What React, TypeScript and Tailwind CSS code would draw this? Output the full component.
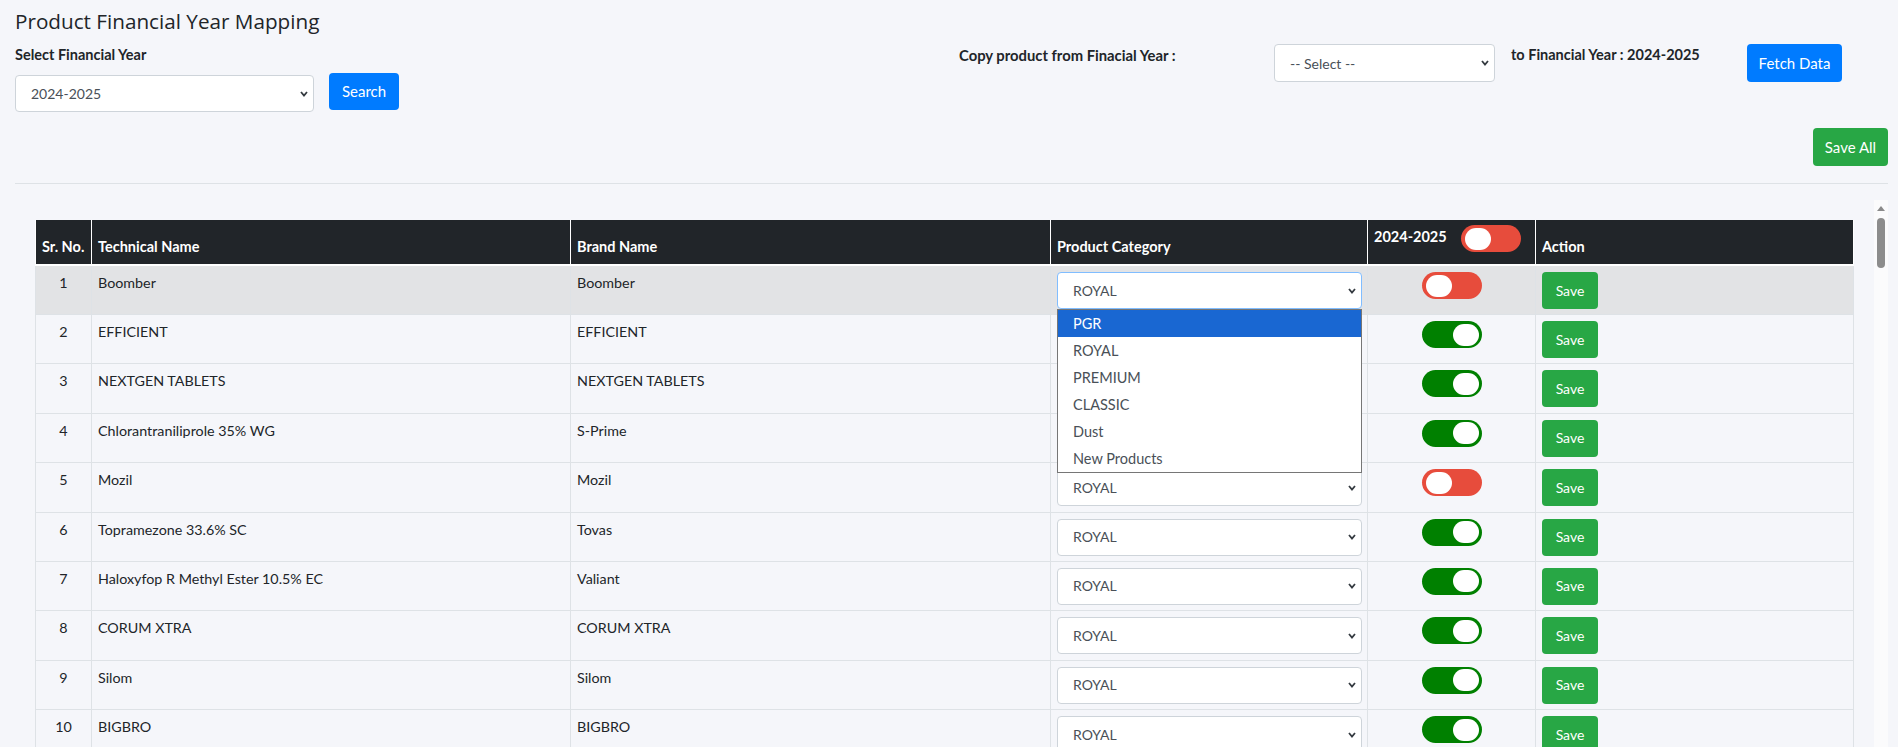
import React from "react";

type Row = { n: number; t: string; b: string; on: boolean };

const rows: Row[] = [
  { n: 1, t: "Boomber", b: "Boomber", on: false },
  { n: 2, t: "EFFICIENT", b: "EFFICIENT", on: true },
  { n: 3, t: "NEXTGEN TABLETS", b: "NEXTGEN TABLETS", on: true },
  { n: 4, t: "Chlorantraniliprole 35% WG", b: "S-Prime", on: true },
  { n: 5, t: "Mozil", b: "Mozil", on: false },
  { n: 6, t: "Topramezone 33.6% SC", b: "Tovas", on: true },
  { n: 7, t: "Haloxyfop R Methyl Ester 10.5% EC", b: "Valiant", on: true },
  { n: 8, t: "CORUM XTRA", b: "CORUM XTRA", on: true },
  { n: 9, t: "Silom", b: "Silom", on: true },
  { n: 10, t: "BIGBRO", b: "BIGBRO", on: true },
];

const options = ["PGR", "ROYAL", "PREMIUM", "CLASSIC", "Dust", "New Products"];

function Chevron() {
  return (
    <svg width="8" height="6" viewBox="0 0 8 6" className="shrink-0">
      <polyline points="1,1 4,4.5 7,1" fill="none" stroke="#343a40" strokeWidth="1.8" />
    </svg>
  );
}

function FakeSelect({
  value,
  focused = false,
  h = "h-[37px]",
  w = "w-full",
}: {
  value: string;
  focused?: boolean;
  h?: string;
  w?: string;
}) {
  return (
    <div
      className={`flex items-center justify-between bg-white border rounded-[4px] pl-[15px] pr-[5px] text-[14px] text-[#495057] ${h} ${w} ${
        focused ? "border-[#80bdff]" : "border-[#ced4da]"
      }`}
    >
      <span>{value}</span>
      <Chevron />
    </div>
  );
}

function Toggle({ on }: { on: boolean }) {
  return (
    <div
      className={`flex items-center w-[60px] h-[27px] rounded-full ${
        on ? "bg-[#008000] justify-end pr-[3px]" : "bg-[#e74c3c] justify-start pl-[4px]"
      }`}
    >
      <div className="w-[26px] h-[22px] rounded-full bg-white" />
    </div>
  );
}

export default function App() {
  return (
    <div className="min-h-screen bg-[#f5f6fa] pl-[15px] pr-[10px] text-[#212529] font-['Lato','Liberation_Sans',sans-serif]">
      <h1 className="pt-[6px] text-[20.7px] leading-[30px] font-normal text-[#212529] font-['Open_Sans','Noto_Sans',sans-serif]">
        Product Financial Year Mapping
      </h1>

      <div className="flex items-start mt-[8px]">
        <div className="w-[944px] shrink-0">
          <div className="mt-[1px] text-[14.5px] leading-[20px] font-bold">Select Financial Year</div>
          <div className="flex items-start mt-[8px]">
            <div className="mt-[2px]">
              <FakeSelect value="2024-2025" w="w-[299px]" />
            </div>
            <button className="ml-[15px] w-[70px] h-[37px] rounded-[4px] bg-[#007bff] text-white text-[15px]">
              Search
            </button>
          </div>
        </div>
        <div className="w-[315px] shrink-0 mt-[1px] text-[14.8px] leading-[20px] font-bold">
          Copy product from Finacial Year :
        </div>
        <FakeSelect value="-- Select --" w="w-[221px]" h="h-[38px]" />
        <div className="ml-[16px] w-[236px] shrink-0 mt-[1px] text-[14.5px] leading-[20px] font-bold">
          to Financial Year : 2024-2025
        </div>
        <button className="w-[95px] h-[38px] rounded-[4px] bg-[#007bff] text-white text-[15px]">
          Fetch Data
        </button>
      </div>

      <div className="flex justify-end mt-[16px]">
        <button className="w-[75px] h-[38px] rounded-[4px] bg-[#28a745] text-white text-[15px]">
          Save All
        </button>
      </div>

      <div className="mt-[17px] border-t border-[#dee2e6]" />

      <div className="flex mt-[16px] h-[547px]">
        <div className="flex-1 min-w-0 overflow-hidden pl-[20px] pr-[21px] pt-[20px]">
          <table className="w-full table-fixed border-collapse">
            <colgroup>
              <col className="w-[56px]" />
              <col className="w-[479px]" />
              <col className="w-[480px]" />
              <col className="w-[317px]" />
              <col className="w-[168px]" />
              <col className="w-[318px]" />
            </colgroup>
            <thead>
              <tr className="h-[45px] bg-[#212529] text-white text-[14.5px] leading-[20px] font-bold">
                <th className="border-x border-b-2 border-white px-[6px] pb-[7px] align-bottom text-left">Sr. No.</th>
                <th className="border-x border-b-2 border-white px-[6px] pb-[7px] align-bottom text-left">Technical Name</th>
                <th className="border-x border-b-2 border-white px-[6px] pb-[7px] align-bottom text-left">Brand Name</th>
                <th className="border-x border-b-2 border-white px-[6px] pb-[7px] align-bottom text-left">Product Category</th>
                <th className="border-x border-b-2 border-white px-[6px] pt-[5px] align-top text-left">
                  <div className="flex items-start gap-[14px]">
                    <span className="mt-[2px]">2024-2025</span>
                    <Toggle on={false} />
                  </div>
                </th>
                <th className="border-x border-b-2 border-white px-[6px] pb-[7px] align-bottom text-left">Action</th>
              </tr>
            </thead>
            <tbody className="text-[14.3px] leading-[20px]">
              {rows.map((r, i) => (
                <tr key={r.n} className={`h-[49.4px] ${i === 0 ? "bg-[#e2e3e5]" : ""}`}>
                  <td className="border border-[#dee2e6] px-[6px] pt-[7px] align-top text-center">{r.n}</td>
                  <td className="border border-[#dee2e6] px-[6px] pt-[7px] align-top">{r.t}</td>
                  <td className="border border-[#dee2e6] px-[6px] pt-[7px] align-top">{r.b}</td>
                  <td className="border border-[#dee2e6] pl-[6px] pr-[5px] pt-[6px] pb-[5px] align-top">
                    {i === 0 ? (
                      <div className="relative">
                        <FakeSelect value="ROYAL" focused />
                        <div className="absolute left-0 right-0 top-full z-10 bg-white border border-[#767676] text-[14.5px] text-[#495057]">
                          {options.map((o, k) => (
                            <div
                              key={o}
                              className={`h-[27px] leading-[27px] pl-[15px] ${
                                k === 0 ? "bg-[#1967d2] text-white" : ""
                              }`}
                            >
                              {o}
                            </div>
                          ))}
                        </div>
                      </div>
                    ) : i <= 3 ? (
                      <div className="h-[37px]" />
                    ) : (
                      <FakeSelect value="ROYAL" />
                    )}
                  </td>
                  <td className="border border-[#dee2e6] pt-[6px] align-top">
                    <div className="flex justify-center">
                      <Toggle on={r.on} />
                    </div>
                  </td>
                  <td className="border border-[#dee2e6] px-[6px] pt-[6px] pb-[5px] align-top">
                    <button className="w-[56px] h-[37px] rounded-[4px] bg-[#28a745] text-white text-[14px]">
                      Save
                    </button>
                  </td>
                </tr>
              ))}
            </tbody>
          </table>
        </div>
        <div className="w-[14px] shrink-0 bg-[#fbfbfc] flex flex-col items-center pt-[6px]">
          <svg width="8" height="5" viewBox="0 0 8 5">
            <polygon points="0,5 4,0 8,5" fill="#8a8a8a" />
          </svg>
          <div className="mt-[7px] w-[8px] h-[50px] rounded-full bg-[#8c8c8c]" />
        </div>
      </div>
    </div>
  );
}
